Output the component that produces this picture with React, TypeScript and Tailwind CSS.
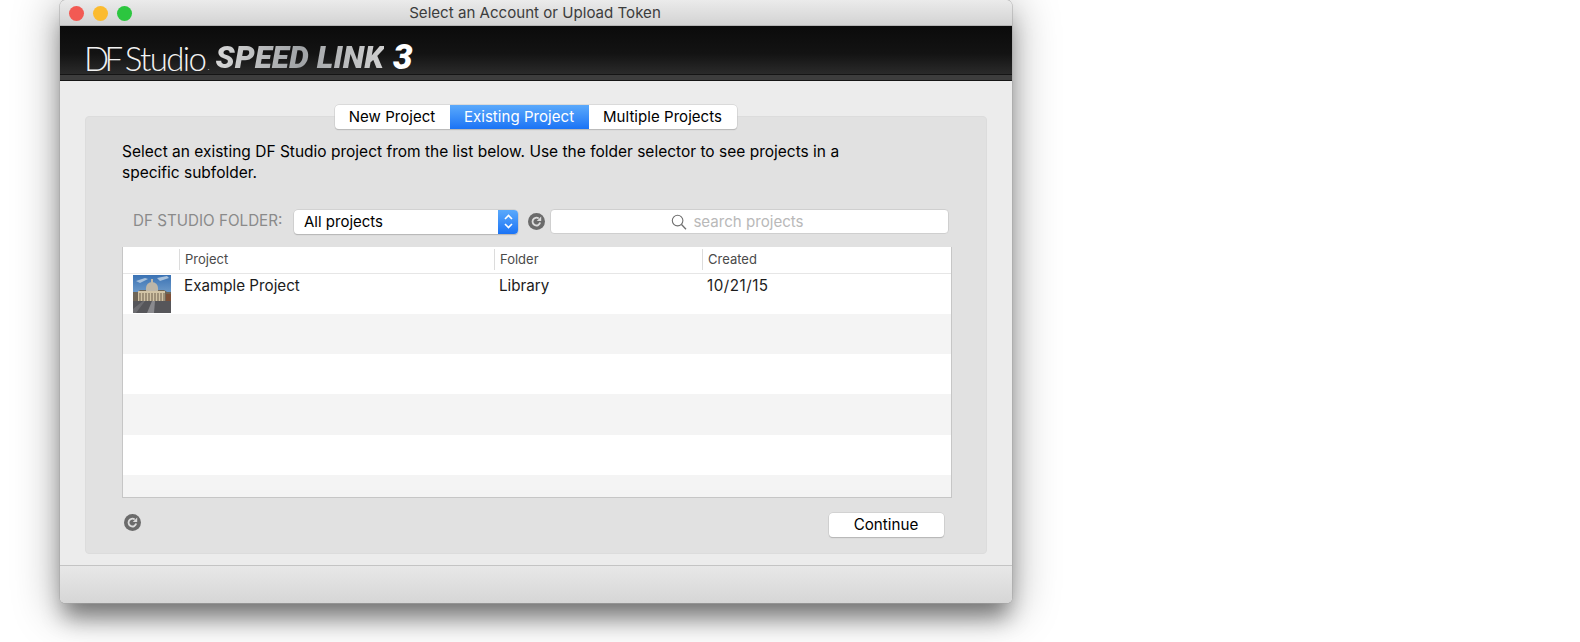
function RefreshIcon() {
  return (
    <svg width="17" height="17" viewBox="0 0 17 17" className="shrink-0">
      <circle cx="8.5" cy="8.5" r="8.5" fill="#6b6b6b" />
      <path d="M12.2 9.6a3.9 3.9 0 1 1-1.5-4.2" fill="none" stroke="#dcdcdc" strokeWidth="1.8" />
      <path d="M13.2 3.4v4.5H8.8z" fill="#dcdcdc" />
    </svg>
  );
}

function Thumbnail() {
  return (
    <svg width="38" height="38" viewBox="0 0 38 38" className="shrink-0">
      <defs>
        <linearGradient id="sky" x1="0" y1="0" x2="0" y2="1">
          <stop offset="0" stopColor="#3a72b4" />
          <stop offset="1" stopColor="#7fa8d0" />
        </linearGradient>
      </defs>
      <rect width="38" height="24" fill="url(#sky)" />
      <path d="M3 6l9-3 3 1-8 4zM24 3l10-2 2 2-9 3z" fill="#a9c2dc" />
      <rect y="25" width="38" height="13" fill="#56565a" />
      <path d="M0 17h5l2-2h24l3 2h4v9H0z" fill="#6e6556" />
      <path d="M5 16h27v10H5z" fill="#d2c4a6" />
      <path d="M13 13a6 6 0 0 1 12 0v3H13z" fill="#bdb6a8" />
      <rect x="18" y="4" width="2" height="4" fill="#bdb6a8" />
      <path d="M7 18v8M10 18v8M13 18v8M16 18v8M19 18v8M22 18v8M25 18v8M28 18v8M31 18v8" stroke="#6a5c4a" strokeWidth="1" />
      <path d="M14 38l5-12h3l-1 12z" fill="#8a8a8e" />
      <path d="M0 34l10-8h2L3 38H0z" fill="#6c6c70" />
      <rect x="33" y="19" width="5" height="7" fill="#7c5038" />
    </svg>
  );
}

function SearchIcon() {
  return (
    <svg width="16" height="16" viewBox="0 0 16 16" className="shrink-0">
      <circle cx="6.6" cy="6.6" r="5.3" fill="none" stroke="#6f6f6f" strokeWidth="1.1" />
      <path d="M10.5 10.5l4.5 4.7" fill="none" stroke="#6f6f6f" strokeWidth="1.3" />
    </svg>
  );
}

export default function App() {
  return (
    <div className="h-[642px] w-[1580px] overflow-hidden bg-white pl-[60px] font-['Inter','Liberation_Sans',sans-serif] text-black">
      <div className="flex h-[603px] w-[952px] flex-col overflow-hidden rounded-b-[5px] rounded-t-[6px] bg-[#ececec] shadow-[0_0_0_0.5px_#a6a6a6,0_18px_22px_-4px_rgba(0,0,0,0.42),0_6px_44px_5px_rgba(0,0,0,0.28)]">
        {/* title bar */}
        <div className="relative flex h-[26px] shrink-0 items-center justify-center border-b border-[#b5b5b5] bg-gradient-to-b from-[#ebebeb] to-[#d3d3d3]">
          <div className="absolute left-[9px] top-[6px] flex gap-[9.5px]">
            <span className="h-[14.5px] w-[14.5px] rounded-full bg-[#f25a53]" />
            <span className="h-[14.5px] w-[14.5px] rounded-full bg-[#fbbb2f]" />
            <span className="h-[14.5px] w-[14.5px] rounded-full bg-[#2cc63f]" />
          </div>
          <span className="pr-[2px] text-[15.1px] leading-none text-[#3c3c3c]">Select an Account or Upload Token</span>
        </div>

        {/* logo banner */}
        <div className="flex h-[55px] shrink-0 flex-col justify-end bg-gradient-to-b from-[#0b0b0b] via-[#131313] to-[#333333]">
          <div className="flex h-[32px] items-end pl-[24px]">
            <span className="font-['Lato',sans-serif] text-[33px] font-light leading-[32px] tracking-[-4.5px] text-[#f2f2f2]">DF</span>
            <span className="ml-[6px] font-['Lato',sans-serif] text-[33px] font-light leading-[32px] tracking-[-1.6px] text-[#f2f2f2]">Studio</span>
            <span className="ml-[2px] text-[7px] leading-[12px] text-[#dddddd]">.</span>
            <span className="ml-[6px] bg-gradient-to-r from-[#d8d8d8] via-[#a0a3a6] to-[#d0d0d0] bg-clip-text font-['Roboto',sans-serif] text-[31.5px] font-black italic leading-[32px] tracking-[0.1px] text-transparent">SPEED LINK</span>
            <span className="ml-[9px] font-['Roboto',sans-serif] text-[35px] font-black italic leading-[32px] text-white">3</span>
          </div>
          <div className="h-[7px] border-y border-[#151515] bg-[#3d3d3d]" />
        </div>

        {/* content */}
        <div className="flex flex-1 flex-col px-[25px] pt-[24px]">
          <div className="relative z-10 mb-[-13px] flex justify-center pr-[1px]">
            <div className="flex h-[24px] overflow-hidden rounded-[4px] bg-white text-[15px] leading-[24px] tracking-[0.05px] shadow-[0_0_0_0.5px_#c8c8c8,0_1px_1px_rgba(0,0,0,0.25)]">
              <span className="w-[115px] text-center">New Project</span>
              <span className="w-[139px] bg-gradient-to-b from-[#5aa9fb] to-[#1a73f5] text-center text-white">Existing Project</span>
              <span className="w-[148px] text-center">Multiple Projects</span>
            </div>
          </div>

          <div className="flex h-[438px] flex-col rounded-[4px] border border-[#dcdcdc] bg-[#e1e1e1] pl-[36px] pr-[34px]">
            <p className="mt-[24px] h-[42px] w-[735px] text-[15.5px] leading-[21px]">
              Select an existing DF Studio project from the list below. Use the folder selector to see projects in a specific subfolder.
            </p>

            <div className="mt-[26px] flex h-[25px] items-center">
              <span className="ml-[11px] w-[161px] whitespace-nowrap text-[15.2px] text-[#8a8a8a]">DF STUDIO FOLDER:</span>
              <div className="flex h-[24px] w-[224px] overflow-hidden rounded-[4px] bg-white shadow-[0_0_0_0.5px_#c4c4c4,0_1px_1px_rgba(0,0,0,0.25)]">
                <span className="flex-1 pl-[10px] text-[15px] leading-[23px]">All projects</span>
                <span className="flex w-[20px] flex-col items-center justify-center gap-[3px] bg-gradient-to-b from-[#5aa9fb] to-[#1a73f5]">
                  <svg width="9" height="6" viewBox="0 0 9 6"><path d="M1 5l3.5-3.5L8 5" fill="none" stroke="#fff" strokeWidth="1.6" /></svg>
                  <svg width="9" height="6" viewBox="0 0 9 6"><path d="M1 1l3.5 3.5L8 1" fill="none" stroke="#fff" strokeWidth="1.6" /></svg>
                </span>
              </div>
              <div className="ml-[9.5px] mr-[5.5px]"><RefreshIcon /></div>
              <div className="flex h-[25px] w-[399px] items-center justify-center gap-[6px] rounded-[4px] border border-[#cfcfcf] bg-white pr-[24px] pt-[1px]">
                <SearchIcon />
                <span className="text-[15.1px] leading-none text-[#b9b9b9]">search projects</span>
              </div>
            </div>

            {/* project table */}
            <div className="mt-[12.5px] flex h-[251.5px] w-[830px] flex-col overflow-hidden border-x border-b border-[#c6c6c6] bg-white">
              <div className="flex h-[27px] shrink-0 items-center border-b border-[#e6e6e6] text-[13px] text-[#4a4a4a]">
                <span className="w-[56px]" />
                <span className="h-[21px] w-[315px] border-l border-[#dcdcdc] pl-[5px] leading-[21px]">Project</span>
                <span className="h-[21px] w-[208px] border-l border-[#dcdcdc] pl-[5px] leading-[21px]">Folder</span>
                <span className="h-[21px] flex-1 border-l border-[#dcdcdc] pl-[5px] leading-[21px]">Created</span>
              </div>
              <div className="flex h-[40.3px] shrink-0 items-start bg-white text-[15.2px] leading-[24px] text-[#1c1c1c]">
                <div className="w-[56px] pl-[10px] pt-[1px]"><Thumbnail /></div>
                <span className="w-[315px] pl-[5px]">Example Project</span>
                <span className="w-[208px] pl-[5px]">Library</span>
                <span className="flex-1 pl-[5px] tracking-[0.5px]">10/21/15</span>
              </div>
              <div className="h-[40.3px] shrink-0 bg-[#f4f4f4]" />
              <div className="h-[40.3px] shrink-0 bg-white" />
              <div className="h-[40.3px] shrink-0 bg-[#f4f4f4]" />
              <div className="h-[40.3px] shrink-0 bg-white" />
              <div className="flex-1 bg-[#f4f4f4]" />
            </div>

            <div className="flex flex-1 items-start justify-between pr-[8.5px]">
              <div className="ml-[2px] mt-[16px]"><RefreshIcon /></div>
              <button className="mt-[15px] h-[23.5px] w-[115px] rounded-[4px] bg-white text-center text-[15.2px] leading-[23px] shadow-[0_0_0_0.5px_#c4c4c4,0_1px_1px_rgba(0,0,0,0.25)]">Continue</button>
            </div>
          </div>
        </div>

        {/* footer */}
        <div className="h-[38px] shrink-0 border-t border-[#c4c4c4] bg-gradient-to-b from-[#e8e8e8] to-[#d6d6d6]" />
      </div>
    </div>
  );
}
